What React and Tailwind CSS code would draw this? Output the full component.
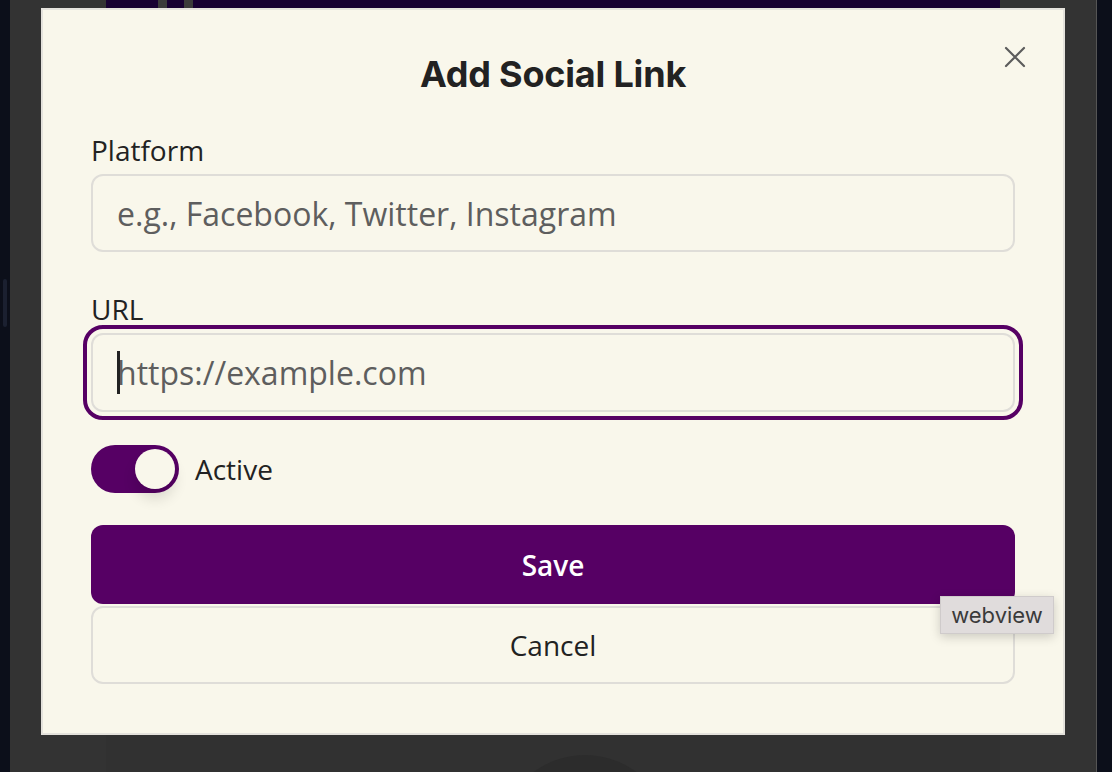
import React, { useState } from 'react';

function Field({ label, placeholder, focused }) {
  return (
    <div className="flex flex-col">
      <label className="mb-1 text-[28px] leading-[40px] text-[#222]">{label}</label>
      <div className="relative">
        <input
          readOnly
          placeholder={placeholder}
          className={
            focused
              ? 'h-[79px] w-full rounded-xl border-2 border-[#dfddd8] bg-transparent px-6 text-[32px] text-[#222] outline-4 outline-offset-4 outline-[#560064] placeholder:text-[#5e5e5e]'
              : 'h-[78px] w-full rounded-xl border-2 border-[#dfddd8] bg-transparent px-6 text-[32px] text-[#222] outline-none placeholder:text-[#5e5e5e]'
          }
        />
        {/* blinking caret from the screenshot */}
        {focused && <span className="absolute left-[26px] top-[18px] h-[43px] w-[3px] bg-[#222]" />}
      </div>
    </div>
  );
}

export default function App() {
  const [active, setActive] = useState(true);

  return (
    <div className="relative flex h-[772px] w-[1112px] overflow-hidden bg-[#333333] font-['Open_Sans',sans-serif]">
      {/* left window edge */}
      <div className="w-[10px] bg-[#0c0f1a] pt-[279px]">
        <div className="mx-auto h-[48px] w-[4px] rounded-full bg-[#1b2030]" />
      </div>

      {/* dimmed page behind the dialog */}
      <div className="flex flex-1 bg-[#333333]">
        <div className="relative ml-[96px] flex w-[894px] flex-col">
          <div className="h-[300px] bg-[#170032]">
            <div className="ml-[52px] h-[30px] w-[35px] rounded-b-full border-x-[9px] border-b-[9px] border-[#3b3b3b]" />
          </div>
          <div className="flex-1 bg-[#313131]" />
          <div className="absolute left-[393px] top-[755px] h-[172px] w-[172px] rounded-full bg-[#2c2c2c]" />
        </div>
      </div>
      <div className="w-[1px] bg-[#555]" />
      <div className="w-[15px] bg-[#0c0f1a]" />

      {/* dialog */}
      <div className="absolute left-[41px] top-[8px] flex h-[727px] w-[1024px] flex-col border-2 border-[#e4e2dc] bg-[#f9f7eb] px-12 pt-[42px]">
        <button className="absolute right-[36px] top-[35px] text-[#5c5c5c]" aria-label="Close">
          <svg width="24" height="24" viewBox="0 0 24 24" fill="none" stroke="currentColor" strokeWidth="2.2" strokeLinecap="round">
            <path d="M3 3L21 21M21 3L3 21" />
          </svg>
        </button>

        <h2 className="text-center font-['Inter',sans-serif] text-[36px] font-bold leading-[44px] tracking-[-0.2px] text-[#222]">
          Add Social Link
        </h2>

        <div className="mt-[34px]">
          <Field label="Platform" placeholder="e.g., Facebook, Twitter, Instagram" />
        </div>
        <div className="mt-[37px]">
          <Field label="URL" placeholder="https://example.com" focused />
        </div>

        <div className="mt-[33px] flex items-center">
          <button
            onClick={() => setActive(!active)}
            className={
              active
                ? 'flex h-[48px] w-[88px] items-center justify-end rounded-full bg-[#560064] p-1'
                : 'flex h-[48px] w-[88px] items-center justify-start rounded-full bg-[#cfcac0] p-1'
            }
          >
            <span className="h-[40px] w-[40px] rounded-full bg-[#f9f7eb] shadow-[0_10px_14px_rgba(0,0,0,0.12)]" />
          </button>
          <span className="ml-4 text-[28px] text-[#222]">Active</span>
        </div>

        <button className="mt-[32px] h-[79px] w-full rounded-xl bg-[#560064] text-[28px] font-semibold text-white">
          Save
        </button>
        <button className="mt-[2px] h-[78px] w-full rounded-xl border-2 border-[#dfddd8] text-[28px] text-[#222]">
          Cancel
        </button>
      </div>

      {/* native tooltip */}
      <div className="absolute left-[940px] top-[596px] flex h-[38px] w-[114px] items-center justify-center border border-[#cfcbcb] bg-[#e0dcdc] font-['Inter',sans-serif] text-[22px] text-[#3a3a3a] shadow-[0_3px_10px_rgba(0,0,0,0.18)]">
        webview
      </div>
    </div>
  );
}
